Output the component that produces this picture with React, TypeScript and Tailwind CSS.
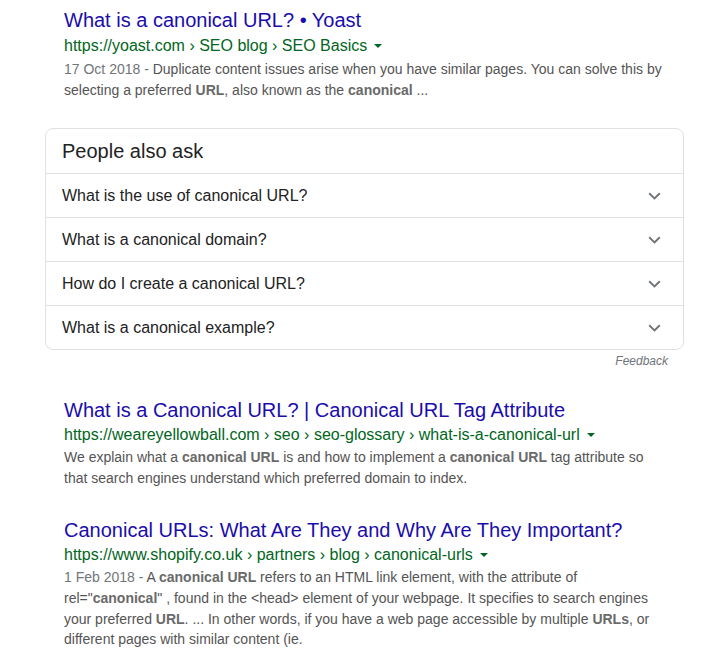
import React from "react";

const font = { fontFamily: '"Liberation Sans", Arial, sans-serif' };

const questions = [
  "What is the use of canonical URL?",
  "What is a canonical domain?",
  "How do I create a canonical URL?",
  "What is a canonical example?",
];

function Caret() {
  return (
    <svg width="10" height="6" viewBox="0 0 10 6" className="ml-[6px] inline-block">
      <path d="M1 1 L9 1 L5 5 Z" fill="#006621" />
    </svg>
  );
}

function Chevron() {
  return (
    <svg width="13" height="8" viewBox="0 0 13 8">
      <path d="M1.2 1.2 L6.5 6.4 L11.8 1.2" fill="none" stroke="#70757a" strokeWidth="1.9" />
    </svg>
  );
}

function Result({
  title,
  url,
  urlLeading = "leading-[24px]",
  children,
}: {
  title: string;
  url: string;
  urlLeading?: string;
  children: React.ReactNode;
}) {
  return (
    <div className="w-[640px]">
      <a className="block text-[20px] leading-[26px] text-[#1a0dab]">{title}</a>
      <div className={`flex items-center text-[16px] text-[#006621] ${urlLeading}`}>
        {url}
        <Caret />
      </div>
      <div className="text-[14px] leading-[20.6px] text-[#545454]">{children}</div>
    </div>
  );
}

const B = ({ children }: { children: React.ReactNode }) => (
  <b className="font-bold text-[#6a6a6a]">{children}</b>
);

const D = ({ children }: { children: React.ReactNode }) => (
  <span className="text-[#70757a]">{children}</span>
);

export default function App() {
  return (
    <div className="min-h-[670px] w-[705px] bg-white pl-[64px] pt-[7px]" style={font}>
      <Result
        title="What is a canonical URL? • Yoast"
        url="https://yoast.com › SEO blog › SEO Basics"
        urlLeading="leading-[26px]"
      >
        <D>17 Oct 2018 - </D>Duplicate content issues arise when you have similar pages. You can solve this by
        <br />
        selecting a preferred <B>URL</B>, also known as the <B>canonical</B> ...
      </Result>

      {/* People also ask */}
      <div className="-ml-[19px] mt-[28px] w-[639px] rounded-lg border border-[#dfe1e5]">
        <div className="flex h-[44px] items-center px-[16px] text-[20px] text-[#222]">People also ask</div>
        {questions.map((q) => (
          <div
            key={q}
            className="flex h-[44px] items-center justify-between border-t border-[#dfe1e5] pl-[16px] pr-[22px] text-[16px] text-[#222]"
          >
            <span>{q}</span>
            <Chevron />
          </div>
        ))}
      </div>
      <div className="w-[604px] pt-[3px] text-right text-[12px] italic leading-[16px] text-[#70757a]">Feedback</div>

      <div className="mt-[28px]">
        <Result
          title="What is a Canonical URL? | Canonical URL Tag Attribute"
          url="https://weareyellowball.com › seo › seo-glossary › what-is-a-canonical-url"
        >
          We explain what a <B>canonical URL</B> is and how to implement a <B>canonical URL</B> tag attribute so
          <br />
          that search engines understand which preferred domain to index.
        </Result>
      </div>

      <div className="mt-[29px]">
        <Result
          title="Canonical URLs: What Are They and Why Are They Important?"
          url="https://www.shopify.co.uk › partners › blog › canonical-urls"
        >
          <D>1 Feb 2018 - </D>A <B>canonical URL</B> refers to an HTML link element, with the attribute of
          <br />
          rel="<B>canonical</B>" , found in the &lt;head&gt; element of your webpage. It specifies to search engines
          <br />
          your preferred <B>URL</B>. ... In other words, if you have a web page accessible by multiple <B>URLs</B>, or
          <br />
          different pages with similar content (ie.
        </Result>
      </div>
    </div>
  );
}
